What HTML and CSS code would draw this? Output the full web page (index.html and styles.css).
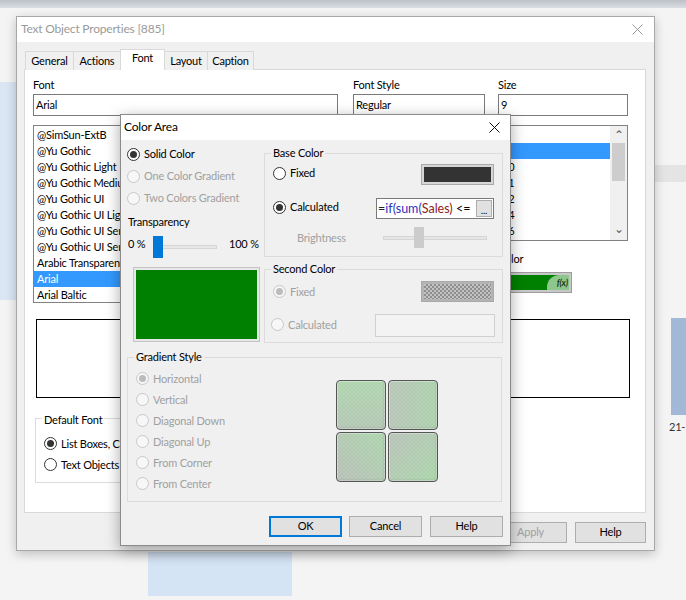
FILE: index.html
```html
<!DOCTYPE html>
<html>
<head>
<meta charset="utf-8">
<title>Text Object Properties</title>
<link rel="stylesheet" href="styles.css">
</head>
<body>
<div class="desktop">
  <div class="topband"></div>
  <div class="bg-blue-left"></div>
  <div class="bg-band-right"></div>
  <div class="bg-bar-right"></div>
  <div class="bg-label">21-</div>
  <div class="bg-blue-bottom"></div>

  <div class="win props">
    <div class="titlebar">
      <span class="title">Text Object Properties [885]</span>
      <svg class="close" width="11" height="11" viewBox="0 0 11 11"><path d="M0.5 0.5L10.5 10.5M10.5 0.5L0.5 10.5" stroke="#9a9a9a" stroke-width="1" fill="none"/></svg>
    </div>
    <div class="props-body">
      <div class="tabs">
        <div class="tab t-general">General</div>
        <div class="tab t-actions">Actions</div>
        <div class="tab t-font sel">Font</div>
        <div class="tab t-layout">Layout</div>
        <div class="tab t-caption">Caption</div>
      </div>
      <div class="panel">
        <div class="font-row">
          <div class="col col-font">
            <div class="lbl">Font</div>
            <div class="input">Arial</div>
            <div class="list list-font">
              <div class="item">@SimSun-ExtB</div>
              <div class="item">@Yu Gothic</div>
              <div class="item">@Yu Gothic Light</div>
              <div class="item">@Yu Gothic Medium</div>
              <div class="item">@Yu Gothic UI</div>
              <div class="item">@Yu Gothic UI Light</div>
              <div class="item">@Yu Gothic UI Semibold</div>
              <div class="item">@Yu Gothic UI Semilight</div>
              <div class="item">Arabic Transparent</div>
              <div class="item sel">Arial</div>
              <div class="item">Arial Baltic</div>
            </div>
          </div>
          <div class="col col-style">
            <div class="lbl">Font Style</div>
            <div class="input">Regular</div>
            <div class="list list-small">
              <div class="items">
                <div class="item sel">Regular</div>
                <div class="item">Italic</div>
                <div class="item">Bold</div>
                <div class="item">Bold Italic</div>
              </div>
            </div>
          </div>
          <div class="col col-size">
            <div class="lbl">Size</div>
            <div class="input">9</div>
            <div class="list list-small">
              <div class="items">
                <div class="item">8</div>
                <div class="item sel">9</div>
                <div class="item">10</div>
                <div class="item">11</div>
                <div class="item">12</div>
                <div class="item">14</div>
                <div class="item">16</div>
              </div>
              <div class="vscroll">
                <div class="arrow">&#8963;</div>
                <div class="vtrack"><div class="vthumb"></div></div>
                <div class="arrow down">&#8964;</div>
              </div>
            </div>
            <div class="lbl color-lbl">Color</div>
            <div class="color-btn"><div class="cb-fill"><span class="fx">f(x)</span></div></div>
          </div>
        </div>
        <div class="sample-box"></div>
        <div class="group default-font">
          <span class="legend">Default Font</span>
          <div class="rrow"><span class="radio on"></span><span class="rl">List Boxes, Charts etc.</span></div>
          <div class="rrow"><span class="radio"></span><span class="rl">Text Objects and Buttons</span></div>
        </div>
      </div>
      <div class="btn-row">
        <div class="btn btn-apply disabled">Apply</div>
        <div class="btn btn-help">Help</div>
      </div>
    </div>
  </div>

  <div class="win color">
    <div class="titlebar">
      <span class="title">Color Area</span>
      <svg class="close" width="11" height="11" viewBox="0 0 11 11"><path d="M0.5 0.5L10.5 10.5M10.5 0.5L0.5 10.5" stroke="#111" stroke-width="1" fill="none"/></svg>
    </div>
    <div class="ca-body">
      <div class="ca-top">
        <div class="ca-left">
          <div class="rrow first"><span class="radio on"></span><span class="rl">Solid Color</span></div>
          <div class="rrow"><span class="radio dis"></span><span class="rl gray">One Color Gradient</span></div>
          <div class="rrow"><span class="radio dis"></span><span class="rl gray">Two Colors Gradient</span></div>
          <div class="trans-label">Transparency</div>
          <div class="trans-row">
            <span class="pct0">0 %</span>
            <div class="slider"><div class="track"></div><div class="thumb"></div></div>
            <span class="pct100">100 %</span>
          </div>
          <div class="preview-swatch"><div class="fill"></div></div>
        </div>
        <div class="ca-right">
          <div class="group base">
            <span class="legend">Base Color</span>
            <div class="grow r1">
              <span class="radio"></span><span class="rl">Fixed</span>
              <div class="swatch dark"><div class="sw-in"></div></div>
            </div>
            <div class="grow r2">
              <span class="radio on"></span><span class="rl">Calculated</span>
              <div class="expr"><span class="expr-text"><span class="op">=</span><span class="fn">if(sum(</span><span class="fld">Sales)</span> &lt;=</span><span class="dots">...</span></div>
            </div>
            <div class="grow r3">
              <span class="rl gray bright">Brightness</span>
              <div class="bslider"><div class="btrack"></div><div class="bthumb"></div></div>
            </div>
          </div>
          <div class="group second">
            <span class="legend">Second Color</span>
            <div class="grow r1">
              <span class="radio dis on"></span><span class="rl gray">Fixed</span>
              <div class="swatch checker"><div class="sw-in"></div></div>
            </div>
            <div class="grow r2">
              <span class="radio dis shift"></span><span class="rl gray">Calculated</span>
              <div class="dis-input"></div>
            </div>
          </div>
        </div>
      </div>
      <div class="group gradient">
        <span class="legend">Gradient Style</span>
        <div class="grad-inner">
          <div class="grad-radios">
            <div class="rrow g"><span class="radio dis on"></span><span class="rl gray">Horizontal</span></div>
            <div class="rrow g"><span class="radio dis"></span><span class="rl gray">Vertical</span></div>
            <div class="rrow g"><span class="radio dis"></span><span class="rl gray">Diagonal Down</span></div>
            <div class="rrow g"><span class="radio dis"></span><span class="rl gray">Diagonal Up</span></div>
            <div class="rrow g"><span class="radio dis"></span><span class="rl gray">From Corner</span></div>
            <div class="rrow g"><span class="radio dis"></span><span class="rl gray">From Center</span></div>
          </div>
          <div class="tiles">
            <div class="tile t1"></div>
            <div class="tile t2"></div>
            <div class="tile t3"></div>
            <div class="tile t4"></div>
          </div>
        </div>
      </div>
      <div class="ca-buttons">
        <div class="btn default">OK</div>
        <div class="btn">Cancel</div>
        <div class="btn">Help</div>
      </div>
    </div>
  </div>
</div>
</body>
</html>
```

FILE: styles.css
```css
* { box-sizing: border-box; }
html, body { margin: 0; padding: 0; }
body {
  font-family: Lato, "Liberation Sans", sans-serif;
  font-size: 11px;
  letter-spacing: -0.2px;
  color: #000;
  background: #f4f4f4;
}
.desktop {
  position: relative;
  width: 686px;
  height: 600px;
  overflow: hidden;
  background: #f4f4f4;
}
.topband { height: 8px; background: linear-gradient(#bcc2c8, #dadde1); }
.bg-blue-left { position: absolute; left: 0; top: 82px; width: 16px; height: 218px; background: #dae6f3; }
.bg-band-right { position: absolute; left: 655px; top: 165px; width: 31px; height: 17px; background: #e4e4e4; }
.bg-bar-right { position: absolute; left: 671px; top: 318px; width: 15px; height: 97px; background: #a2b8d6; }
.bg-label { position: absolute; left: 669px; top: 420px; font-size: 11px; line-height: 14px; color: #333; }
.bg-blue-bottom { position: absolute; left: 148px; top: 552px; width: 144px; height: 44px; background: #d5e4f5; }

/* windows */
.win { position: absolute; display: flex; flex-direction: column; background: #f0f0f0; }
.props {
  left: 16px; top: 16px; width: 639px; height: 535px; z-index: 1;
  border: 1px solid #a8a8a8;
  box-shadow: 0 3px 10px rgba(0,0,0,.22);
}
.color {
  left: 120px; top: 114px; width: 391px; height: 432px; z-index: 2;
  border: 1px solid #8a8a8a;
  box-shadow: 0 4px 14px rgba(0,0,0,.35);
}
.titlebar {
  flex: none; height: 25px; background: #fff;
  display: flex; align-items: center; justify-content: space-between;
}
.props .titlebar { padding: 0 11px 0 4px; }
.color .titlebar { padding: 0 10px 0 3px; }
.title { font-size: 12px; line-height: 23px; padding-bottom: 2px; }
.props .title { color: #9a9a9a; }
.close { display: block; }

/* Text Object Properties body */
.props-body { flex: 1; padding: 7px 8px 0 7px; display: flex; flex-direction: column; }
.tabs { display: flex; align-items: flex-end; height: 21px; padding-left: 1px; position: relative; z-index: 2; }
.tab {
  height: 19px; border: 1px solid #d9d9d9; border-bottom: none;
  background: #f0f0f0; text-align: center; line-height: 17px; margin-left: -1px;
}
.tab:first-child { margin-left: 0; }
.tab.sel { height: 21px; background: #fff; line-height: 15px; }
.t-general { width: 49px; }
.t-actions { width: 48px; }
.t-font { width: 45px; }
.t-layout { width: 44px; }
.t-caption { width: 47px; }
.panel {
  margin-top: -1px; height: 444px; background: #fff; border: 1px solid #d9d9d9;
  padding: 8px 0 0 8px; position: relative; z-index: 1;
}
.font-row { display: flex; align-items: flex-start; }
.col { display: flex; flex-direction: column; }
.col-font { width: 305px; }
.col-style { width: 132px; margin-left: 15px; }
.col-size { width: 130px; margin-left: 13px; }
.lbl { height: 15px; line-height: 14px; margin-bottom: 1px; }
.input {
  height: 22px; border: 1px solid #7a7a7a; background: #fff;
  padding-left: 2px; line-height: 19px;
}
.list {
  margin-top: 9px; border: 1px solid #828282; background: #fff;
  padding-top: 1px; overflow: hidden;
}
.list-font { height: 178px; }
.list-small { height: 116px; display: flex; padding-top: 0; }
.list-small .items { flex: 1; padding-top: 1px; }
.item { height: 16px; line-height: 15px; padding-left: 3px; white-space: nowrap; }
.item.sel { background: #3399ff; color: #fff; }
.vscroll { width: 17px; background: #f0f0f0; display: flex; flex-direction: column; }
.arrow { height: 17px; line-height: 17px; text-align: center; color: #606060; font-size: 12px; }
.arrow.down { line-height: 12px; }
.vtrack { flex: 1; padding: 0 2px; }
.vthumb { height: 38px; background: #cdcdcd; }
.color-lbl { margin-top: 11px; margin-bottom: 0; }
.color-btn {
  margin-top: 5px; width: 74px; height: 21px; border: 1px solid #9c9c9c;
  background: #c8c8c8; padding: 2px;
}
.cb-fill { height: 100%; background: #008000; display: flex; justify-content: flex-end; }
.fx {
  width: 22px; background: #8dc78d; border-radius: 12px 0 0 0;
  font-size: 9px; font-style: italic; font-weight: bold; color: #1d3b1d;
  line-height: 15px; text-align: right; padding-right: 1px;
}
.sample-box {
  margin: 16px 0 0 3px; width: 594px; height: 79px;
  border: 1px solid #000; background: #fff;
}

/* group boxes */
.group { position: relative; border: 1px solid #dcdcdc; }
.legend {
  position: absolute; top: -9px; left: 6px; padding: 0 2px;
  line-height: 15px; background: #f0f0f0; white-space: nowrap;
}
.default-font { margin: 20px 0 0 2px; width: 295px; height: 65px; padding: 14px 0 0 8px; }
.default-font .legend { background: #fff; top: -7px; }
.default-font .rrow { height: 21px; }

/* radios */
.rrow { display: flex; align-items: center; height: 22px; white-space: nowrap; }
.radio {
  flex: none; position: relative; width: 13px; height: 13px; border-radius: 50%;
  border: 1px solid #333; background: #fff;
}
.radio.on::after {
  content: ""; position: absolute; left: 2px; top: 2px; width: 7px; height: 7px;
  border-radius: 50%; background: #333;
}
.radio.dis { border-color: #c8c8c8; background: #f7f7f7; }
.radio.dis.on::after { background: #bcbcbc; }
.radio.shift { margin-left: -2px; }
.rl { margin-left: 4px; line-height: 15px; padding-bottom: 1px; }
.gray { color: #a0a0a0; }

.btn-row { display: flex; justify-content: flex-end; margin-top: 9px; }
.btn {
  height: 21px; width: 73px; border: 1px solid #adadad; background: #e1e1e1;
  text-align: center; line-height: 18px;
}
.btn-apply { color: #a0a0a0; margin-right: 8px; }
.btn-help { width: 71px; }

/* Color Area body */
.ca-body { flex: 1; padding: 0 7px 0 6px; display: flex; flex-direction: column; }
.ca-top { display: flex; }
.ca-left { width: 137px; display: flex; flex-direction: column; }
.ca-left .first { margin-top: 3px; }
.trans-label { margin-top: 5px; height: 16px; line-height: 15px; padding-left: 1px; }
.trans-row { margin-top: 6px; height: 22px; display: flex; align-items: flex-start; }
.pct0 { width: 26px; padding-left: 1px; line-height: 15px; }
.pct100 { margin-left: 12px; line-height: 15px; white-space: nowrap; }
.slider { position: relative; width: 64px; height: 22px; }
.track { position: absolute; left: 0; right: 0; top: 9px; height: 4px; background: #e7e7e7; border: 1px solid #d6d6d6; }
.thumb { position: absolute; left: 0; top: 0; width: 10px; height: 22px; background: #0078d7; }
.preview-swatch {
  margin: 9px 0 0 6px; width: 127px; height: 75px;
  border: 1px solid #c4c4c4; padding: 2px; background: #e8e8e8;
}
.preview-swatch .fill { height: 100%; background: #008000; }

.ca-right { width: 239px; display: flex; flex-direction: column; }
.grow { display: flex; align-items: center; white-space: nowrap; }
.base { margin-top: 13px; height: 104px; padding: 10px 8px 0 8px; }
.base .r1 { height: 21px; }
.base .r2 { height: 21px; margin-top: 13px; }
.base .r3 { height: 21px; margin-top: 8px; }
.base .r1 .radio, .base .r1 .rl,
.base .r2 .radio, .base .r2 .rl { margin-bottom: 3px; }
.second { margin-top: 12px; height: 74px; padding: 11px 8px 0 8px; }
.second .r1 { height: 21px; }
.second .r2 { height: 23px; margin-top: 12px; }
.second .r2 .radio, .second .r2 .rl { margin-bottom: 2px; }
.swatch {
  margin-left: auto; width: 73px; height: 21px; border: 1px solid #a9a9a9; padding: 2px;
}
.swatch.dark { background: #d6d6d6; }
.swatch.dark .sw-in { height: 100%; background: #333; }
.swatch.checker { background: #b4b4b4; }
.swatch.checker .sw-in {
  height: 100%;
  background: repeating-conic-gradient(#8e8e8e 0 25%, #c2c2c2 0 50%) 0 0 / 4px 4px;
}
.expr {
  margin-left: auto; width: 118px; height: 21px; border: 1px solid #7a7a7a; background: #fff;
  display: flex; align-items: center; overflow: hidden;
}
.expr-text { flex: 1; overflow: hidden; white-space: nowrap; padding-left: 1px; line-height: 18px; font-size: 12.5px; letter-spacing: 0; }
.op { color: #222; }
.fn { color: #2f2fbf; }
.fld { color: #8b2222; }
.dots {
  flex: none; width: 16px; height: 17px; margin-right: 1px; border: 1px solid #adadad;
  background: #e1e1e1; text-align: center; line-height: 19px; font-size: 10px;
}
.bright { margin-left: 24px; }
.bslider { position: relative; margin-left: auto; margin-right: 7px; width: 104px; height: 21px; }
.btrack { position: absolute; left: 0; right: 0; top: 9px; height: 4px; background: #e6e6e6; border: 1px solid #d5d5d5; }
.bthumb { position: absolute; left: 31px; top: 0; width: 10px; height: 21px; background: #cccccc; }
.dis-input {
  margin-left: auto; margin-right: -1px; width: 120px; height: 23px;
  border: 1px solid #d0d0d0; background: #f3f3f3;
}

.gradient { margin-top: 14px; width: 375px; height: 145px; padding: 10px 0 0 8px; }
.grad-inner { display: flex; }
.grad-radios { width: 200px; }
.rrow.g { height: 21px; }
.tiles {
  margin-top: 12px; display: grid; grid-template-columns: 50px 50px; grid-template-rows: 50px 50px; gap: 2px;
}
.tile {
  border: 1px solid #555; border-radius: 4px;
  box-shadow: inset 0 0 0 1px rgba(255,255,255,.35), inset -1px -1px 2px rgba(0,0,0,.15);
}
.t1 { background: repeating-conic-gradient(rgba(255,255,255,.14) 0 25%, transparent 0 50%) 0 0 / 4px 4px, linear-gradient(#abd4ab, #b2c4b2); }
.t2 { background: repeating-conic-gradient(rgba(255,255,255,.14) 0 25%, transparent 0 50%) 0 0 / 4px 4px, linear-gradient(to right, #b5c3b5, #a9cfa9); }
.t3 { background: repeating-conic-gradient(rgba(255,255,255,.14) 0 25%, transparent 0 50%) 0 0 / 4px 4px, linear-gradient(45deg, #b5bdb5, #a9d3a9); }
.t4 { background: repeating-conic-gradient(rgba(255,255,255,.14) 0 25%, transparent 0 50%) 0 0 / 4px 4px, linear-gradient(135deg, #b6c0b6, #a7d3a7); }

.ca-buttons { display: flex; justify-content: flex-end; margin-top: 14px; }
.ca-buttons .btn { margin-left: 7px; }
.ca-buttons .btn:last-child { margin-left: 8px; }
.btn.default { border-color: #0078d7; box-shadow: inset 0 0 0 1px #0078d7; }
```
